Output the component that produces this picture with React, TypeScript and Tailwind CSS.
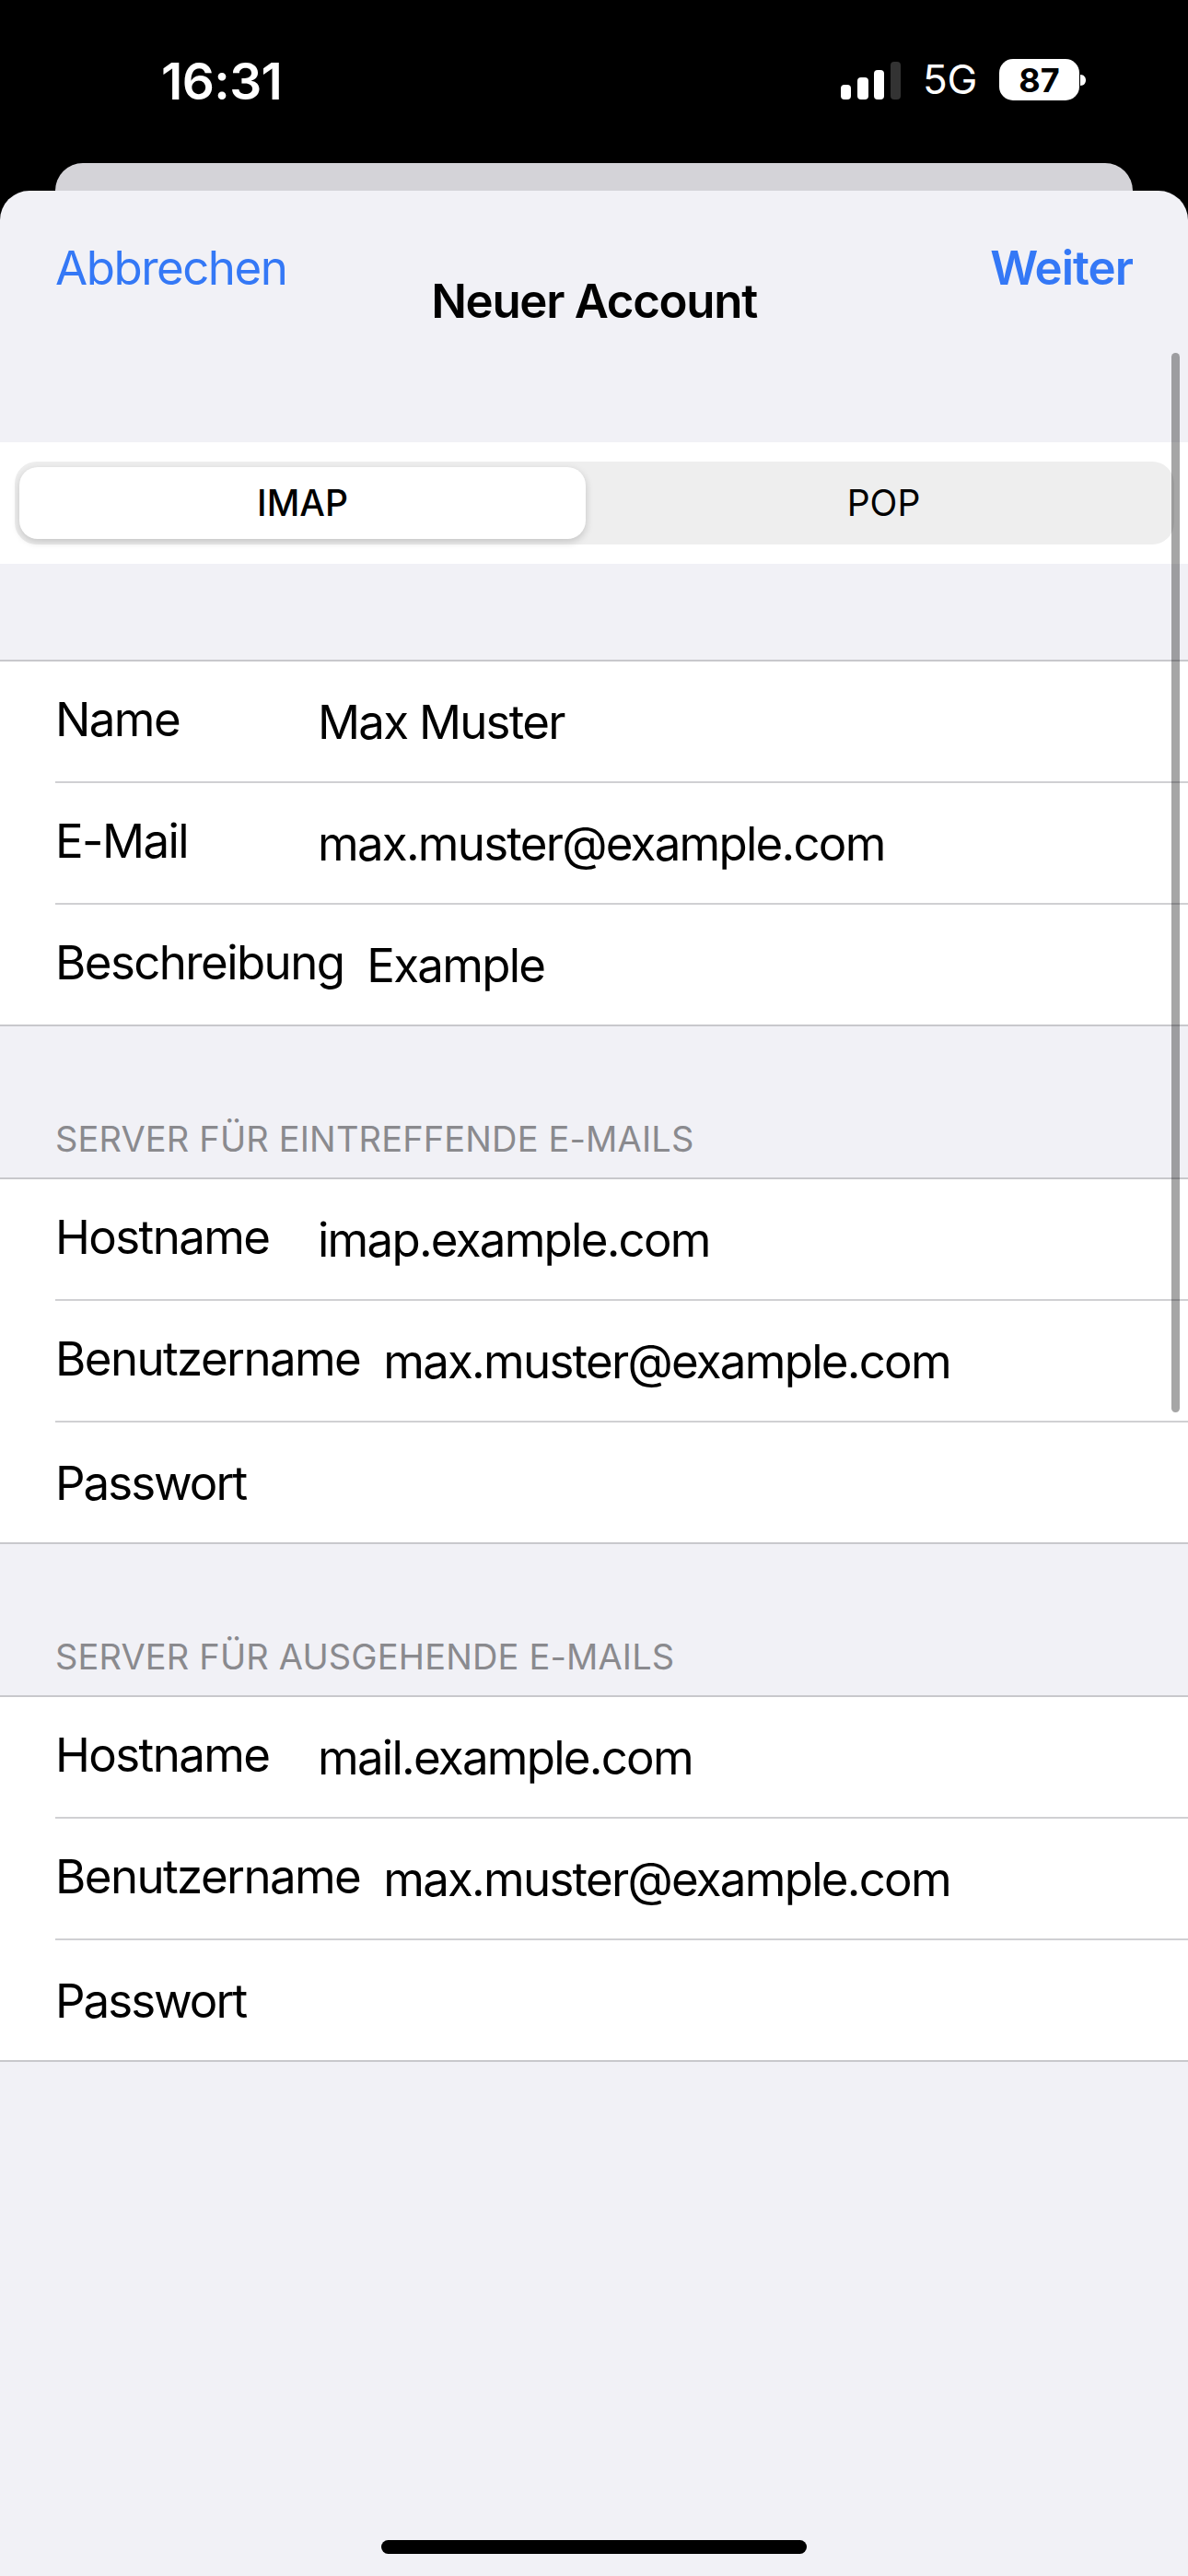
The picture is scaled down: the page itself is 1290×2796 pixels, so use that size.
const font = "[font-family:Inter,'Liberation_Sans',sans-serif]";

function Row({ label, value, last }: { label: string; value?: string; last?: boolean }) {
  return (
    <div className={`ml-[60px] flex items-start gap-[26px] pt-[32px] text-[51px] leading-[62px] tracking-[-1.6px] text-black ${last ? "h-[130px]" : "h-[132px] border-b-2 border-[#d0d0d3]"}`}>
      <span className={`min-w-[260px] whitespace-nowrap ${value ? "" : "mt-[3px] tracking-[-2px]"}`}>{label}</span>
      {value ? <span className="mt-[3px] -ml-[1px] whitespace-nowrap tracking-[-1.75px]">{value}</span> : null}
    </div>
  );
}

function Group({ rows }: { rows: { label: string; value?: string }[] }) {
  return (
    <div className="border-y-2 border-[#c8c8cc] bg-white">
      {rows.map((r, i) => (
        <Row key={r.label} label={r.label} value={r.value} last={i === rows.length - 1} />
      ))}
    </div>
  );
}

function SectionTitle({ children }: { children: string }) {
  return (
    <div className="flex h-[164px] items-end pb-[19px] pl-[60px] text-[38px] leading-[46px] tracking-[0.15px] text-[#8a8a8e]">
      {children}
    </div>
  );
}

export default function App() {
  return (
    <div className={`${font} flex h-[2796px] w-[1290px] flex-col overflow-hidden bg-black`}>
      <div className="flex h-[177px] items-start justify-between pl-[175px] pr-[110px] pt-[58px] text-white">
        <span className="text-[55px] font-semibold leading-[60px] tracking-[-0.6px]">16:31</span>
        <div className="flex items-center pt-[6px]">
          <svg width="65" height="41" viewBox="0 0 65 41" className="mt-[2px]">
            <rect x="0" y="25" width="11" height="16" rx="4" fill="#fff" />
            <rect x="18" y="17" width="12" height="24" rx="4" fill="#fff" />
            <rect x="36" y="9" width="11" height="32" rx="4" fill="#fff" />
            <rect x="54" y="0" width="11" height="41" rx="4" fill="#333" />
          </svg>
          <span className="ml-[24px] text-[44px] font-normal leading-[45px] tracking-[-0.3px]">5G</span>
          <div className="ml-[24px] flex h-[45px] w-[87px] items-center justify-center rounded-[15px] bg-white text-[36px] font-bold leading-none text-black">
            87
          </div>
          <svg width="7" height="12" viewBox="0 0 7 12" className="ml-[1px]">
            <path d="M0 0 C4 0 6 3 6 6 C6 9 4 12 0 12 Z" fill="#fff" />
          </svg>
        </div>
      </div>
      <div className="mx-[60px] h-[30px] shrink-0 rounded-t-[30px] bg-[#d4d3d8]" />
      <div className="relative flex-1 rounded-t-[32px] bg-[#f1f1f6]">
        <div className="grid h-[273px] grid-cols-[1fr_auto_1fr] px-[60px]">
          <span className="pt-[53px] text-[51px] leading-[62px] tracking-[-1.5px] text-[#3478f6]">Abbrechen</span>
          <span className="pt-[89px] text-[51px] font-semibold leading-[62px] tracking-[-1.3px] text-black">Neuer Account</span>
          <span className="pt-[53px] text-right text-[51px] font-semibold leading-[62px] tracking-[-1px] text-[#3478f6]">Weiter</span>
        </div>
        <div className="h-[132px] bg-white py-[21px] pl-[16px] pr-[15px]">
          <div className="flex h-[90px] rounded-[24px] bg-[#eeeeee] p-[6px_0_6px_5px] text-[39px] leading-[48px] text-black">
            <div className="flex h-[78px] w-[615px] items-center justify-center rounded-[20px] bg-white font-medium shadow-[0_3px_8px_rgba(0,0,0,0.18)]">IMAP</div>
            <div className="flex h-[78px] flex-1 items-center justify-center pl-[8px]">POP</div>
          </div>
        </div>
        <div className="h-[104px]" />
        <Group rows={[{ label: "Name", value: "Max Muster" }, { label: "E-Mail", value: "max.muster@example.com" }, { label: "Beschreibung", value: "Example" }]} />
        <SectionTitle>SERVER FÜR EINTREFFENDE E-MAILS</SectionTitle>
        <Group rows={[{ label: "Hostname", value: "imap.example.com" }, { label: "Benutzername", value: "max.muster@example.com" }, { label: "Passwort" }]} />
        <SectionTitle>SERVER FÜR AUSGEHENDE E-MAILS</SectionTitle>
        <Group rows={[{ label: "Hostname", value: "mail.example.com" }, { label: "Benutzername", value: "max.muster@example.com" }, { label: "Passwort" }]} />
        <div className="absolute bottom-[24px] left-[414px] h-[15px] w-[462px] rounded-full bg-black" />
        <div className="absolute left-[1272px] top-[176px] h-[1150px] w-[9px] rounded-full bg-black/35" />
      </div>
    </div>
  );
}
